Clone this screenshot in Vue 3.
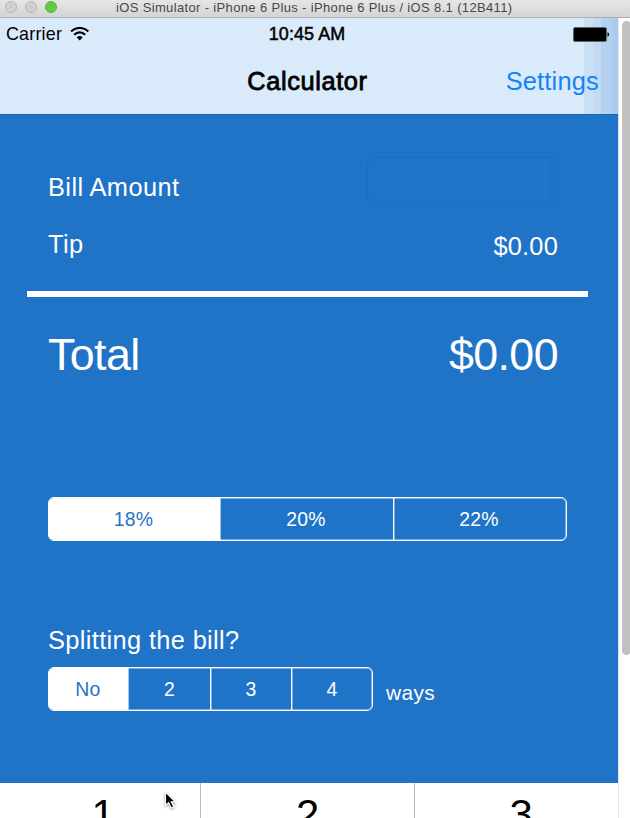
<script setup>
import { ref } from 'vue'

const tips = ['18%', '20%', '22%']
const splits = ['No', '2', '3', '4']
const keys = ['1', '2', '3']
const tip = ref('18%')
const split = ref('No')
</script>

<template>
  <div class="window">
    <header class="titlebar">
      <div class="lights"><i></i><i></i><i class="on"></i></div>
      <span class="caption">iOS Simulator - iPhone 6 Plus - iPhone 6 Plus / iOS 8.1 (12B411)</span>
    </header>
    <div class="body">
      <main class="screen">
        <section class="nav">
          <div class="status">
            <div class="carrier">
              <span>Carrier</span>
              <svg width="20" height="14" viewBox="0 0 20 14" fill="none" stroke="#000">
                <path d="M1.1 4.5C6-.2 13.400-.2 18.300 4.500" stroke-width="2.200" />
                <path d="M4.200 7.700C7.400 4.700 12 4.700 15.200 7.700" stroke-width="2.200" />
                <path d="M6.700 10.200Q9.700 7.600 12.700 10.200L9.700 13.400Z" fill="#000" stroke="none" />
              </svg>
            </div>
            <span class="time">10:45 AM</span>
            <svg class="battery" width="37" height="15" viewBox="0 0 37 15">
              <rect x=".5" y=".5" width="33" height="14" rx="1.500" fill="#000" stroke="#596570" />
              <path d="M34.500 5Q38 7.500 34.500 10Z" fill="#000" />
            </svg>
          </div>
          <div class="bar">
            <span></span>
            <span class="title">Calculator</span>
            <a class="settings">Settings</a>
          </div>
        </section>

        <section class="calc">
          <div class="row bill"><span class="bill-label">Bill Amount</span><div class="field"><i></i></div></div>
          <div class="row tip"><span>Tip</span><span class="amount">$0.00</span></div>
          <div class="rule"></div>
          <div class="row total"><span>Total</span><span>$0.00</span></div>
          <div class="segments tips">
            <button v-for="t in tips" :key="t" :class="{ active: t === tip }" @click="tip = t">{{ t }}</button>
          </div>
          <p class="question">Splitting the bill?</p>
          <div class="split">
            <div class="segments ways-control">
              <button v-for="s in splits" :key="s" :class="{ active: s === split }" @click="split = s">{{ s }}</button>
            </div>
            <span class="ways">ways</span>
          </div>
        </section>

        <section class="keypad">
          <div v-for="k in keys" :key="k" class="key">{{ k }}</div>
        </section>
      </main>
      <aside class="gutter"><div class="thumb"></div></aside>
    </div>
    <svg class="cursor" width="14" height="20" viewBox="0 0 14 20">
      <path d="M1.500 1V14.500L4.600 11.700L7.200 17L9.700 15.800L7.300 10.800H11.300Z" fill="#000" stroke="#fff" stroke-width="1.200" />
    </svg>
  </div>
</template>

<style>
body {
  margin: 0;
  overflow: hidden;
}
</style>

<style scoped>
.window {
  position: relative;
  width: 630px;
  height: 818px;
  overflow: hidden;
  display: flex;
  flex-direction: column;
  background: #fff;
  font-family: "Liberation Sans", Arial, sans-serif;
  font-size: 25.4px;
  letter-spacing: 0.35px;
}
.titlebar {
  box-sizing: border-box;
  flex: none;
  height: 18px;
  display: flex;
  align-items: flex-start;
  background: linear-gradient(#e6e6e6, #d4d4d4);
  border-bottom: 1px solid #adadad;
}
.lights {
  width: 111px;
  padding: 1px 0 0 5px;
  display: flex;
  gap: 8px;
}
.lights i {
  box-sizing: border-box;
  width: 12px;
  height: 12px;
  border: 1px solid #b5b5b5;
  border-radius: 50%;
  background: radial-gradient(circle, #c4c4c4 1px, #d2d2d2 2px);
}
.lights .on {
  background: #61cb42;
  border-color: #53b934;
}
.caption {
  font-size: 13px;
  line-height: 15px;
  letter-spacing: 0.35px;
  color: #484848;
  white-space: nowrap;
}
.body {
  flex: 1;
  min-height: 0;
  display: flex;
}
.screen {
  width: 618px;
  display: flex;
  flex-direction: column;
}
.nav {
  box-sizing: border-box;
  flex: none;
  height: 97px;
  border-bottom: 1px solid #1a66b2;
  background: linear-gradient(90deg, #d9eafa 584px, #cae0f5 584px 593px, #c3daf3 593px 601px, #b5d1f0 601px 610px, #b0cff0 610px 614px, #a6caf0 614px);
}
.status {
  height: 32px;
  display: grid;
  grid-template-columns: 1fr auto 1fr;
  align-items: center;
  padding: 0 8px 0 6px;
  font-size: 17.9px;
  line-height: 32px;
}
.carrier {
  display: flex;
  align-items: center;
  gap: 8px;
  letter-spacing: 0.2px;
}
.time {
  padding-right: 2px;
  letter-spacing: 0.1px;
  -webkit-text-stroke: 0.5px #000;
}
.battery {
  justify-self: end;
}
.bar {
  height: 63px;
  display: grid;
  grid-template-columns: 1fr auto 1fr;
  padding: 0 19px 0 16px;
  line-height: 62px;
}
.title {
  letter-spacing: 0.6px;
  -webkit-text-stroke: 0.8px #000;
}
.settings {
  justify-self: end;
  letter-spacing: 0.2px;
  color: #1482fb;
}
.calc {
  flex: none;
  height: 668px;
  background: #1f74c8;
  color: #fff;
}
.row {
  display: flex;
  justify-content: space-between;
  padding: 0 60px 0 48px;
}
.bill {
  padding-top: 42px;
  height: 47px;
}
.bill-label {
  line-height: 61px;
  letter-spacing: 0.4px;
}
.field {
  box-sizing: border-box;
  width: 191px;
  height: 47px;
  border: 1px solid #1d6dbc;
  border-radius: 8px;
  padding: 5px 9px;
  display: flex;
  justify-content: flex-end;
}
.field i {
  width: 4px;
  height: 35px;
  background: #2376c9;
}
.tip {
  height: 87px;
  line-height: 80px;
}
.amount {
  line-height: 84px;
  letter-spacing: 0.2px;
}
.rule {
  height: 6px;
  margin: 0 30px 0 27px;
  background: #fff;
}
.total {
  height: 200px;
  font-size: 44.8px;
  line-height: 115px;
  letter-spacing: -0.6px;
}
.segments {
  box-sizing: border-box;
  height: 44px;
  border: 1px solid #fff;
  border-radius: 6px;
  box-shadow: inset 0 0 0 1px rgba(255, 255, 255, 0.4);
  display: grid;
  overflow: hidden;
}
.segments button {
  border: 0;
  border-left: 1px solid #fff;
  box-shadow: inset 1px 0 rgba(255, 255, 255, 0.4);
  padding: 0;
  background: none;
  color: #fff;
  font: 19.4px/42px "Liberation Sans", Arial, sans-serif;
  letter-spacing: 0.3px;
}
.segments button:first-child {
  border-left: 0;
}
.segments .active {
  background: #fff;
  color: #1f74c8;
}
.segments .active + button {
  border-left-color: rgba(255, 255, 255, 0.6);
  box-shadow: none;
}
.tips {
  width: 519px;
  margin-left: 48px;
  grid-template-columns: 171px 173px 173px;
}
.tips button {
  padding-right: 2px;
}
.question {
  margin: 0;
  padding: 74px 0 0 48px;
  height: 52px;
  line-height: 50px;
}
.split {
  display: flex;
  gap: 13px;
  padding-left: 48px;
}
.ways-control {
  width: 325px;
  grid-template-columns: 79px 82px 81px 81px;
}
.ways-control button:first-child {
  padding-right: 1px;
}
.ways {
  font-size: 20.9px;
  line-height: 52px;
}
.keypad {
  flex: 1;
  min-height: 0;
  display: grid;
  grid-template-columns: 201px 214px 203px;
}
.key {
  box-sizing: border-box;
  border-right: 1px solid #bbb;
  text-align: center;
  font-size: 41.8px;
  line-height: 63px;
  letter-spacing: 0;
  color: #000;
}
.key:first-child {
  padding-left: 6px;
}
.key:last-child {
  padding-left: 9px;
  border-right: 0;
}
.gutter {
  box-sizing: border-box;
  width: 12px;
  padding: 3px 0 0 3px;
  border-left: 1px solid #e3e3e3;
}
.thumb {
  width: 9px;
  height: 634px;
  border-radius: 5px;
  background: #c1c1c1;
}
.cursor {
  position: absolute;
  left: 164px;
  top: 791px;
  filter: drop-shadow(0 1px 1px rgba(0, 0, 0, 0.4));
}
</style>
